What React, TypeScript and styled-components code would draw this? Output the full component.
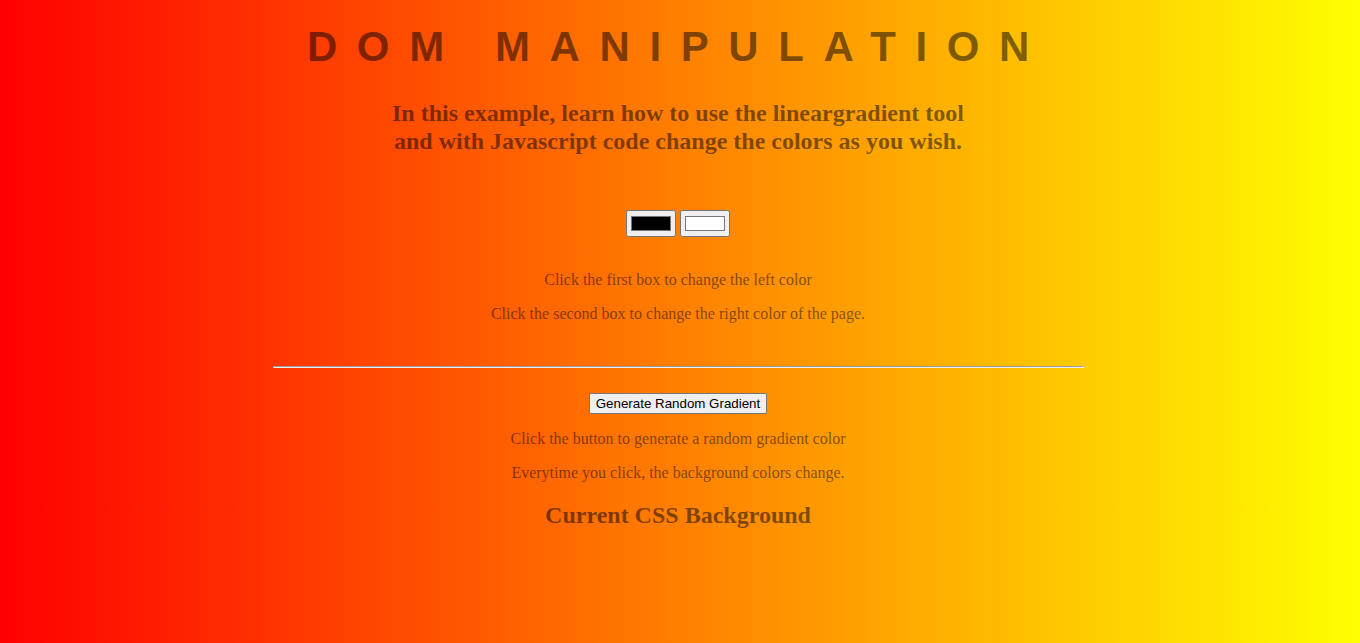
import React from "react";
import styled, { createGlobalStyle } from "styled-components";

const Global = createGlobalStyle`
  html, body {
    margin: 0;
    padding: 0;
  }
  body {
    margin: 8px;
    min-height: 627px;
    background: linear-gradient(to right, #ff0000, #ffff00);
    color: rgba(0, 0, 0, 0.5);
    font-family: "Liberation Serif", "Times New Roman", serif;
    text-align: center;
  }
`;

const Page = styled.main`
  display: flex;
  flex-direction: column;
  align-items: center;
  padding-right: 4px;
`;

const Title = styled.h1`
  margin: 16px 0 0;
  font-family: "Liberation Sans", Arial, sans-serif;
  font-size: 42px;
  font-weight: bold;
  letter-spacing: 19.6px;
  line-height: 46px;
`;

const Intro = styled.h3`
  margin: 29px 0 0;
  font-size: 24px;
  font-weight: bold;
  line-height: 28px;
`;

const Pickers = styled.div`
  display: flex;
  gap: 4px;
  margin-top: 55px;
`;

const ColorInput = styled.input`
  width: 50px;
  height: 27px;
  margin: 0;
`;

const Note = styled.p`
  margin: 0;
  font-size: 16px;
  line-height: 18px;
  & + & {
    margin-top: 16px;
  }
`;

const Notes = styled.div<{ $top: number }>`
  margin-top: ${(p) => p.$top}px;
  display: flex;
  flex-direction: column;
  align-items: center;
`;

const Rule = styled.hr`
  width: 809px;
  margin: 43px 0 0;
  border: 1px inset;
  color: gray;
  height: 0;
`;

const GenButton = styled.button`
  margin-top: 25px;
  font-family: "Liberation Sans", Arial, sans-serif;
  font-size: 13.333px;
  padding: 1px 6px;
  height: 21px;
  color: #000;
  background: #efefef;
  border: 1px solid #767676;
  border-radius: 2px;
`;

const Current = styled.h2`
  margin: 19px 0 0;
  font-size: 24px;
  font-weight: bold;
  line-height: 28px;
`;

export default function App() {
  return (
    <>
      <Global />
      <Page>
        <Title>DOM MANIPULATION</Title>
        <Intro>
          In this example, learn how to use the lineargradient tool
          <br />
          and with Javascript code change the colors as you wish.
        </Intro>
        <Pickers>
          <ColorInput type="color" defaultValue="#000000" />
          <ColorInput type="color" defaultValue="#ffffff" />
        </Pickers>
        <Notes $top={34}>
          <Note>Click the first box to change the left color</Note>
          <Note>Click the second box to change the right color of the page.</Note>
        </Notes>
        <Rule />
        <GenButton type="button">Generate Random Gradient</GenButton>
        <Notes $top={16}>
          <Note>Click the button to generate a random gradient color</Note>
          <Note>Everytime you click, the background colors change.</Note>
        </Notes>
        <Current>Current CSS Background</Current>
      </Page>
    </>
  );
}
